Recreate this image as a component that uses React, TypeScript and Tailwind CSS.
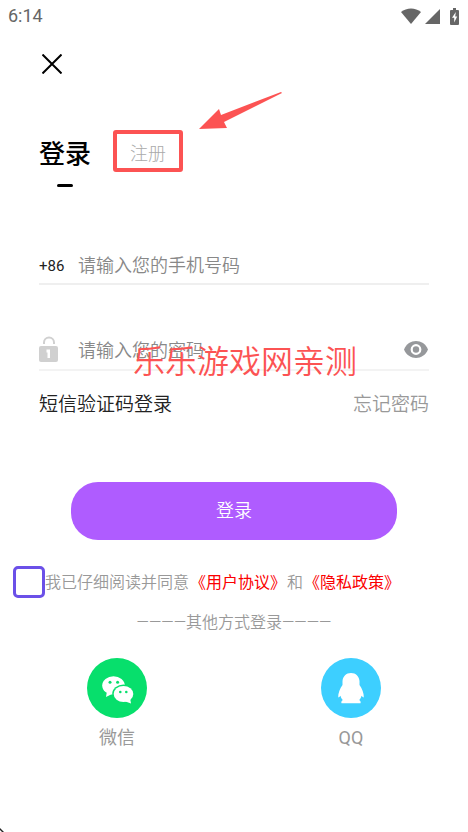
import { useState } from 'react'
import type { ReactNode } from 'react'

function StatusBar() {
  return (
    <div className="flex h-8 items-center justify-between pl-2 pr-[9px] text-[#666]">
      <span className="text-lg font-normal leading-8">6:14</span>
      <div className="flex items-center">
        <svg viewBox="0 0 20 16" className="h-4 w-5" fill="currentColor" aria-hidden="true">
          <path d="M0 4C5.500-.7 14.500-.7 20 4L10 16Z" />
        </svg>
        <svg viewBox="0 0 15 15" className="ml-1 h-[15px] w-[15px]" fill="currentColor" aria-hidden="true">
          <path d="M15 0V15H0Z" />
        </svg>
        <svg viewBox="0 0 9 17" className="ml-2.5 h-[17px] w-[9px]" aria-hidden="true">
          <path d="M3 0H6V2H8Q9 2 9 3V16Q9 17 8 17H1Q0 17 0 16V3Q0 2 1 2H3Z" fill="currentColor" />
          <path d="M5.800 4 2 9.700H4.200V14.500L7.200 8.500H5.200Z" fill="white" />
        </svg>
      </div>
    </div>
  )
}

function LockIcon() {
  return (
    <svg viewBox="0 0 20 27" className="h-[27px] w-5 shrink-0" aria-hidden="true">
      <path d="M5 8V6.500A5 5 0 0 1 15 6.500V8" fill="none" stroke="#d0d0d0" strokeWidth="2" />
      <rect x="0" y="10" width="19" height="16" rx="2" fill="#d0d0d0" />
      <path d="M7.500 13.500H11V22H8.500V16.500H7.500Z" fill="white" />
    </svg>
  )
}

function EyeIcon() {
  return (
    <svg viewBox="0 0 24 17" className="h-[17px] w-6" aria-hidden="true">
      <path d="M0 8.500C4.500-2.800 19.500-2.800 24 8.500C19.500 19.800 4.500 19.800 0 8.500Z" fill="#96989b" />
      <circle cx="12" cy="8.500" r="4.300" fill="#96989b" stroke="white" strokeWidth="2.200" />
    </svg>
  )
}

function WechatIcon() {
  return (
    <svg viewBox="0 0 60 60" className="h-15 w-15" aria-hidden="true">
      <circle cx="30" cy="30" r="30" fill="#07df6c" />
      <path d="M20 33 19 39 26 35.500Z" fill="white" />
      <ellipse cx="26.500" cy="27.500" rx="11.300" ry="9.300" fill="white" />
      <ellipse cx="36.500" cy="36" rx="11.300" ry="9.600" fill="#07df6c" />
      <ellipse cx="36.500" cy="36" rx="9.800" ry="8.100" fill="white" />
      <path d="M37 43 44 45.500 43 40Z" fill="white" />
      <g fill="#07df6c">
        <circle cx="23" cy="24.200" r="1.500" />
        <circle cx="30.600" cy="24.200" r="1.500" />
        <circle cx="33.300" cy="34" r="1.300" />
        <circle cx="39.300" cy="34" r="1.300" />
      </g>
    </svg>
  )
}

function QQIcon() {
  return (
    <svg viewBox="0 0 60 60" className="h-15 w-15" aria-hidden="true">
      <circle cx="30" cy="30" r="30" fill="#3dcfff" />
      <path
        d="M30 15C25 15 22 18.500 21.500 23V27C19 30.500 17 35.500 17.200 39.500C18.200 39.200 19 38.500 19.600 37.800C19.800 39.500 20.500 40.800 21.800 42C20.500 42.800 20 44 20.500 45.200H39.500C40 44 39.500 42.800 38.200 42C39.500 40.800 40.200 39.500 40.400 37.800C41 38.500 41.800 39.200 42.800 39.500C43 35.500 41 30.500 38.500 27V23C38 18.500 35 15 30 15Z"
        fill="white"
      />
    </svg>
  )
}

function SocialButton({ label, children }: { label: string; children: ReactNode }) {
  return (
    <button
      type="button"
      className="flex flex-1 flex-col items-center gap-1.5 text-lg font-normal leading-7 text-[#999]"
    >
      {children}
      <span>{label}</span>
    </button>
  )
}

export default function App() {
  const [phone, setPhone] = useState('')
  const [password, setPassword] = useState('')
  const [visible, setVisible] = useState(false)
  const [agreed, setAgreed] = useState(false)

  return (
    <main className="relative min-h-screen bg-white font-['Roboto','Noto_Sans_CJK_SC',sans-serif] font-[350]">
      <StatusBar />

      <header className="px-[39px] pt-5">
        <button type="button" aria-label="关闭" className="flex h-6 w-[26px] items-center justify-center">
          <svg viewBox="0 0 20 20" className="h-5 w-5" stroke="black" strokeWidth="2" aria-hidden="true">
            <path d="M.5.5 19.500 19.500M19.500.5.5 19.500" />
          </svg>
        </button>

        <nav className="mt-[54px] flex items-start">
          <button type="button" className="flex flex-col items-center text-[26px] font-medium leading-12 text-black">
            登录
            <span className="mt-1.5 h-[3px] w-4 rounded-full bg-black" />
          </button>
          <div className="relative ml-[22px]">
            <button
              type="button"
              className="block h-[42px] w-[70px] rounded-[3px] border-4 border-[#fc5353] pt-1.5 text-lg leading-7 font-light text-[#aaa]"
            >
              注册
            </button>
            <svg
              viewBox="0 0 84 38"
              className="absolute bottom-full left-full ml-4 h-[38px] w-[84px]"
              fill="#fc5353"
              aria-hidden="true"
            >
              <path d="M0 37 20 17 22 23 82 0 83 1 25 30 28 36Z" />
            </svg>
          </div>
        </nav>
      </header>

      <form onSubmit={(e) => e.preventDefault()}>
        <div className="px-[39px] pt-[60px]">
          <div className="flex h-[38px] items-center border-b-2 border-[#efefef]">
            <label htmlFor="phone" className="w-[39px] shrink-0 pt-0.5 text-[15px] font-normal leading-7 text-[#222]">
              +86
            </label>
            <input
              id="phone"
              type="tel"
              placeholder="请输入您的手机号码"
              value={phone}
              onChange={(e) => setPhone(e.target.value)}
              className="h-8 min-w-0 flex-1 text-lg outline-none placeholder:text-[#888]"
            />
          </div>

          <div className="relative mt-11 flex h-[42px] items-center border-b-2 border-[#f3f3f3]">
            <label htmlFor="password" aria-label="密码" className="w-[39px] shrink-0">
              <LockIcon />
            </label>
            <input
              id="password"
              type={visible ? 'text' : 'password'}
              placeholder="请输入您的密码"
              value={password}
              onChange={(e) => setPassword(e.target.value)}
              className="h-8 min-w-0 flex-1 pt-0.5 text-lg outline-none placeholder:text-[#888]"
            />
            <button type="button" aria-label="显示密码" onClick={() => setVisible(!visible)} className="mr-px">
              <EyeIcon />
            </button>
            <span className="pointer-events-none absolute top-2 left-[94px] text-[32px] leading-[50px] whitespace-nowrap text-[#fc5353]">
              乐乐游戏网亲测
            </span>
          </div>

          <div className="mt-4.5 flex justify-between text-[19px] leading-8">
            <button type="button" className="text-[#222]">
              短信验证码登录
            </button>
            <button type="button" className="text-[#999]">
              忘记密码
            </button>
          </div>
        </div>

        <div className="px-[71px] pt-[61px]">
          <button type="submit" className="h-[58px] w-full rounded-[27px] bg-[#af5cff] text-lg text-white">
            登录
          </button>
        </div>

        <div className="flex items-center pt-[26px] pl-[13px] text-base leading-7 text-[#999]">
          <input
            id="agree"
            type="checkbox"
            checked={agreed}
            onChange={(e) => setAgreed(e.target.checked)}
            className="h-8 w-8 shrink-0 appearance-none rounded-[5px] border-3 border-[#6b50e8] checked:bg-[#6b50e8]"
          />
          <p className="pt-0.5 whitespace-nowrap">
            <label htmlFor="agree">我已仔细阅读并同意</label>
            <a href="#terms" className="mx-px font-normal text-[#fb0000]">
              《用户协议》
            </a>
            和
            <a href="#privacy" className="mx-px font-normal text-[#fb0000]">
              《隐私政策》
            </a>
          </p>
        </div>
      </form>

      <p className="mt-3 text-center text-base leading-[26px] text-[#999]">————其他方式登录————</p>

      <div className="mt-[22px] flex">
        <SocialButton label="微信">
          <WechatIcon />
        </SocialButton>
        <SocialButton label="QQ">
          <QQIcon />
        </SocialButton>
      </div>

      <svg viewBox="0 0 4 4" className="absolute bottom-0 left-0 h-1 w-1" aria-hidden="true">
        <path d="M0 0 4 4H2L0 2Z" fill="#222" />
      </svg>
    </main>
  )
}
